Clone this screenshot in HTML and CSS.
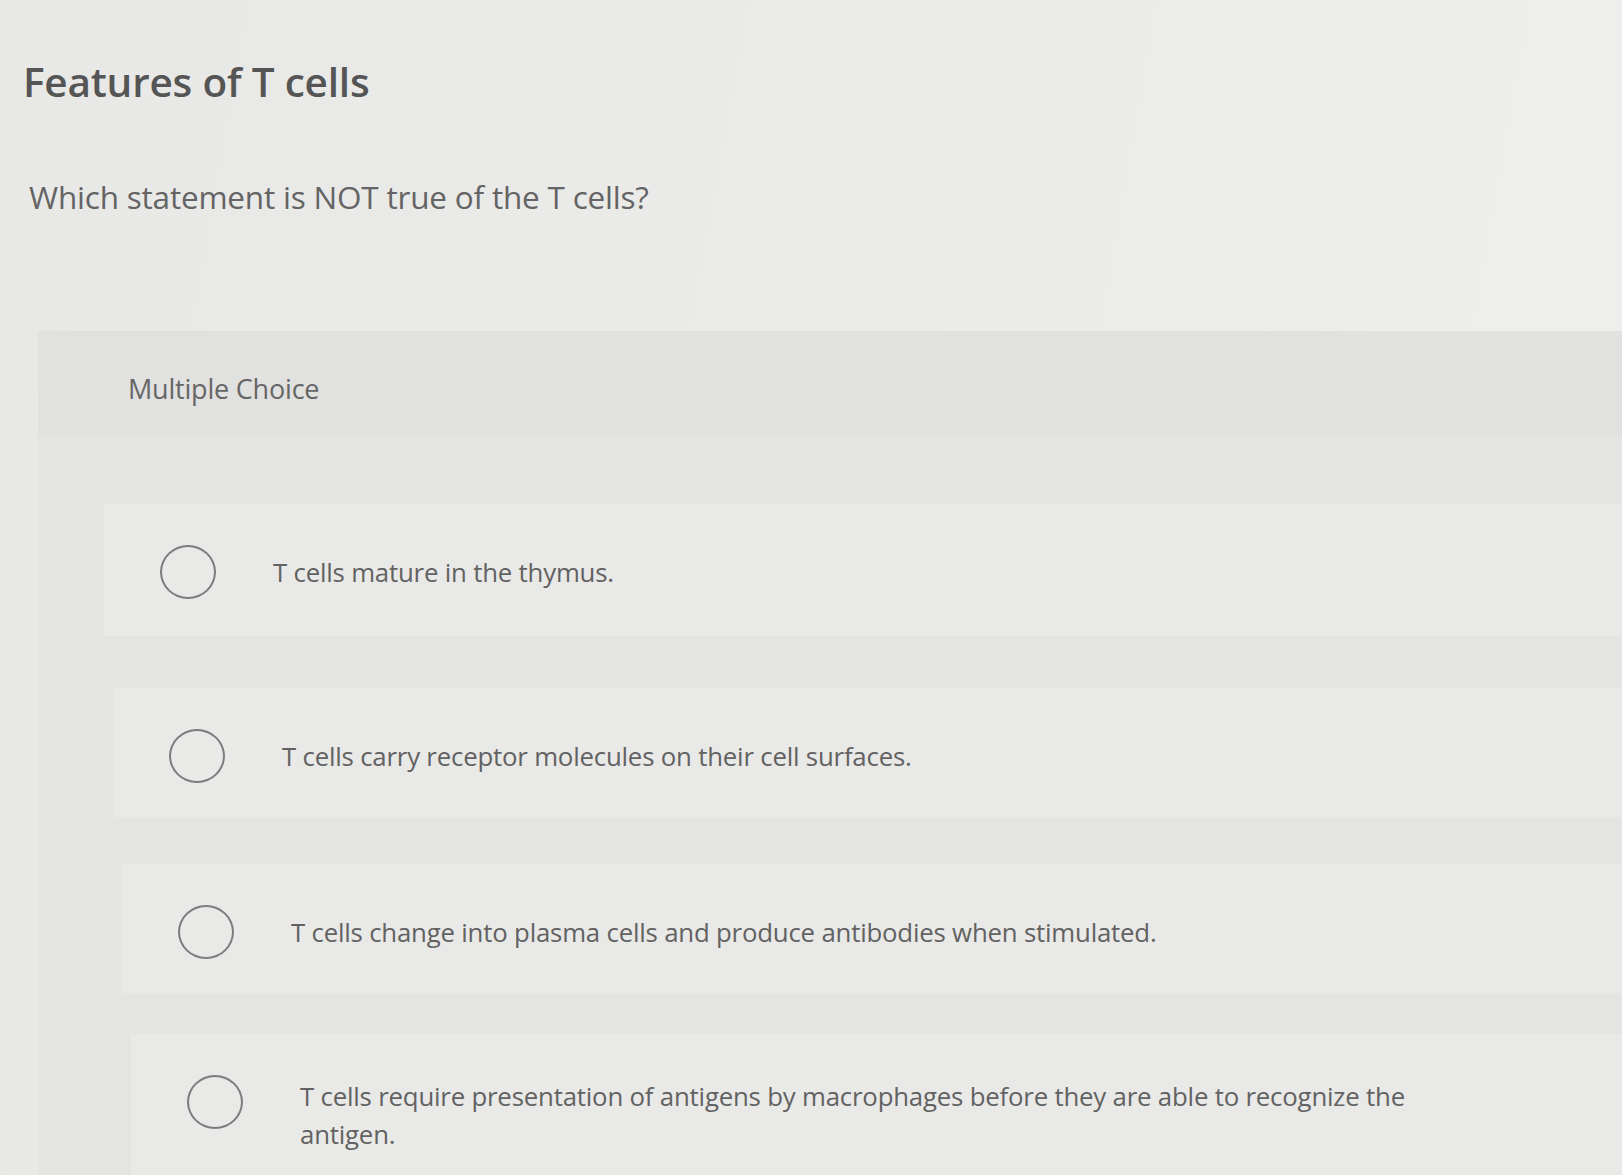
FILE: index.html
```html
<!DOCTYPE html>
<html lang="en">
<head>
<meta charset="utf-8">
<title>Features of T cells</title>
<link rel="stylesheet" href="styles.css">
</head>
<body>
<main class="page">
  <h1 class="title">Features of T cells</h1>
  <p class="question">Which statement is NOT true of the T cells?</p>
  <section class="panel">
    <div class="panel-header">Multiple Choice</div>
    <div class="options">
      <label class="option">
        <span class="radio"></span>
        <span class="option-text">T cells mature in the thymus.</span>
      </label>
      <label class="option">
        <span class="radio"></span>
        <span class="option-text">T cells carry receptor molecules on their cell surfaces.</span>
      </label>
      <label class="option">
        <span class="radio"></span>
        <span class="option-text">T cells change into plasma cells and produce antibodies when stimulated.</span>
      </label>
      <label class="option">
        <span class="radio"></span>
        <span class="option-text">T cells require presentation of antigens by macrophages before they are able to recognize the antigen.</span>
      </label>
    </div>
  </section>
</main>
</body>
</html>
```
FILE: styles.css
```css
html, body {
  margin: 0;
  padding: 0;
}

body {
  background: linear-gradient(100deg, #e8e8e6 0%, #ebebe9 50%, #efefed 100%);
  font-family: "Open Sans", "Lato", "Liberation Sans", sans-serif;
  color: #5c5c5c;
  height: 1175px;
  overflow: hidden;
}

.page {
  display: flex;
  flex-direction: column;
  height: 1175px;
}

.title {
  margin: 56px 0 0 23px;
  font-size: 40.5px;
  font-weight: 600;
  line-height: 52px;
  color: #555;
  letter-spacing: -0.2px;
}

.question {
  margin: 70px 0 0 29px;
  font-size: 31.5px;
  line-height: 38px;
  color: #646464;
  letter-spacing: -0.2px;
}

.panel {
  flex: 1;
  margin: 115px 0 0 38px;
  background: #e1e1df;
  display: flex;
  flex-direction: column;
  min-height: 0;
}

.panel-header {
  flex: none;
  height: 104px;
  padding-left: 90px;
  padding-top: 10px;
  display: flex;
  align-items: center;
  font-size: 27px;
  color: #666;
  box-sizing: border-box;
  letter-spacing: -0.2px;
}

.options {
  flex: 1;
  background: #e4e4e2;
  padding-top: 69px;
  display: flex;
  flex-direction: column;
  min-height: 0;
}

.option {
  flex: none;
  display: flex;
  align-items: flex-start;
  height: 132px;
  background: #e9e9e7;
  margin-left: 66px;
  padding-left: 56px;
  box-sizing: border-box;
}

.option:nth-child(2) { margin: 52px 0 0 75px; height: 129px; }
.option:nth-child(3) { margin: 47px 0 0 84px; height: 129px; }
.option:nth-child(4) { margin: 41px 0 0 93px; flex: 1; height: auto; min-height: 0; }

.radio {
  flex: none;
  width: 56px;
  height: 54px;
  margin-top: 41px;
  border: 2px solid #7c7c80;
  border-radius: 50%;
  box-sizing: border-box;
}

.option-text {
  margin: 49px 0 0 57px;
  max-width: 1180px;
  font-size: 25.8px;
  line-height: 38px;
  color: #626262;
  letter-spacing: -0.2px;
}

.option:nth-child(4) .option-text {
  margin-top: 43px;
}
```
